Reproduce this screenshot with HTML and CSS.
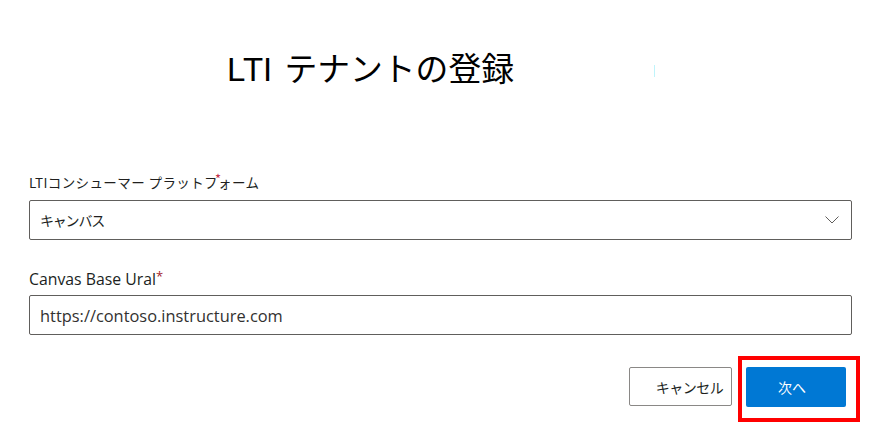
FILE: index.html
```html
<!DOCTYPE html>
<html lang="ja">
<head>
<meta charset="utf-8">
<link rel="stylesheet" href="styles.css">
</head>
<body>
<div class="page">
  <h1 class="title"><span class="lti">LTI</span> <span class="jp-title">テナントの登録</span><span class="artifact"></span></h1>
  <form class="form">
    <div class="field first">
      <label class="label jp">LTIコンシューマー プラットフォーム<span class="star-over">*</span></label>
      <div class="box select">
        <span class="value jp">キャンバス</span>
        <svg class="chev" width="14" height="8" viewBox="0 0 14 8"><path d="M0.5 0.5 L7 7 L13.5 0.5" fill="none" stroke="#605e5c" stroke-width="1"/></svg>
      </div>
    </div>
    <div class="field second">
      <label class="label en">Canvas Base Ural<span class="star">*</span></label>
      <div class="box input">
        <span class="value en url">https://contoso.instructure.com</span>
      </div>
    </div>
    <div class="actions">
      <button type="button" class="btn cancel">キャンセル</button>
      <div class="highlight">
        <button type="button" class="btn primary">次へ</button>
      </div>
    </div>
  </form>
</div>
</body>
</html>
```

FILE: styles.css
```css
* { box-sizing: border-box; }
html, body { margin: 0; padding: 0; background: #ffffff; }
body {
  width: 880px;
  height: 438px;
  overflow: hidden;
  font-family: "Liberation Sans", "Noto Sans CJK JP", sans-serif;
  color: #000;
}
.page { padding: 0 20px 0 29px; }
.title {
  margin: 0;
  padding: 46px 0 0 198px;
  height: 100px;
  font-weight: 400;
  font-size: 33px;
  line-height: 48px;
  font-family: "Liberation Sans", "Noto Sans CJK JP", sans-serif;
  position: relative;
}
.title .lti { font-size: 33px; margin-right: 3px; }
.title .jp-title { font-size: 32.8px; }
.artifact {
  position: absolute;
  left: 625px;
  top: 65px;
  width: 1px;
  height: 12px;
  background: #bff4fb;
}
.form { display: flex; flex-direction: column; }
.field { display: flex; flex-direction: column; margin-right: 8px; }
.field.first { margin-top: 70px; }
.field.second { margin-top: 25px; }
.label {
  font-size: 14px;
  line-height: 20px;
  height: 30px;
  padding-top: 2px;
  color: #201f1e;
  position: relative;
}
.label.jp { font-family: "Noto Sans CJK JP", sans-serif; font-size: 13.5px; letter-spacing: 0.4px; }
.label.en { font-family: "Open Sans", "Noto Sans", sans-serif; font-size: 15.8px; line-height: 18px; padding-top: 2px; }
.star { color: #a4262c; font-size: 13px; vertical-align: 4px; }
.star-over {
  position: absolute;
  left: 186px;
  top: -1px;
  color: #c4314b;
  font-size: 13px;
}
.box {
  height: 40px;
  border: 1px solid #605e5c;
  border-radius: 2px;
  display: flex;
  align-items: center;
  padding: 0 10px;
}
.select { justify-content: space-between; padding-right: 12px; }
.value { font-size: 14px; color: #201f1e; }
.value.jp { font-family: "Noto Sans CJK JP", sans-serif; font-size: 14px; letter-spacing: -1.2px; }
.value.url { font-family: "Open Sans", "Noto Sans", sans-serif; font-size: 16.4px; color: #323130; }
.actions {
  margin-top: 21px;
  display: flex;
  justify-content: flex-end;
  align-items: flex-start;
  gap: 6px;
}
.btn {
  height: 40px;
  border-radius: 2px;
  font-family: "Noto Sans CJK JP", sans-serif;
  font-size: 14px;
  cursor: pointer;
}
.cancel {
  margin-top: 11px;
  width: 103px;
  height: 39px;
  background: #fff;
  border: 1px solid #8a8886;
  color: #201f1e;
  padding: 0 0 0 18px;
  letter-spacing: -0.5px;
}
.highlight {
  border: 4px solid #ff0000;
  padding: 7px 10px 11px 4px;
}
.primary {
  width: 100px;
  background: #0078d4;
  border: none;
  color: #fff;
  display: block;
  padding: 0 8px 0 0;
}
```
